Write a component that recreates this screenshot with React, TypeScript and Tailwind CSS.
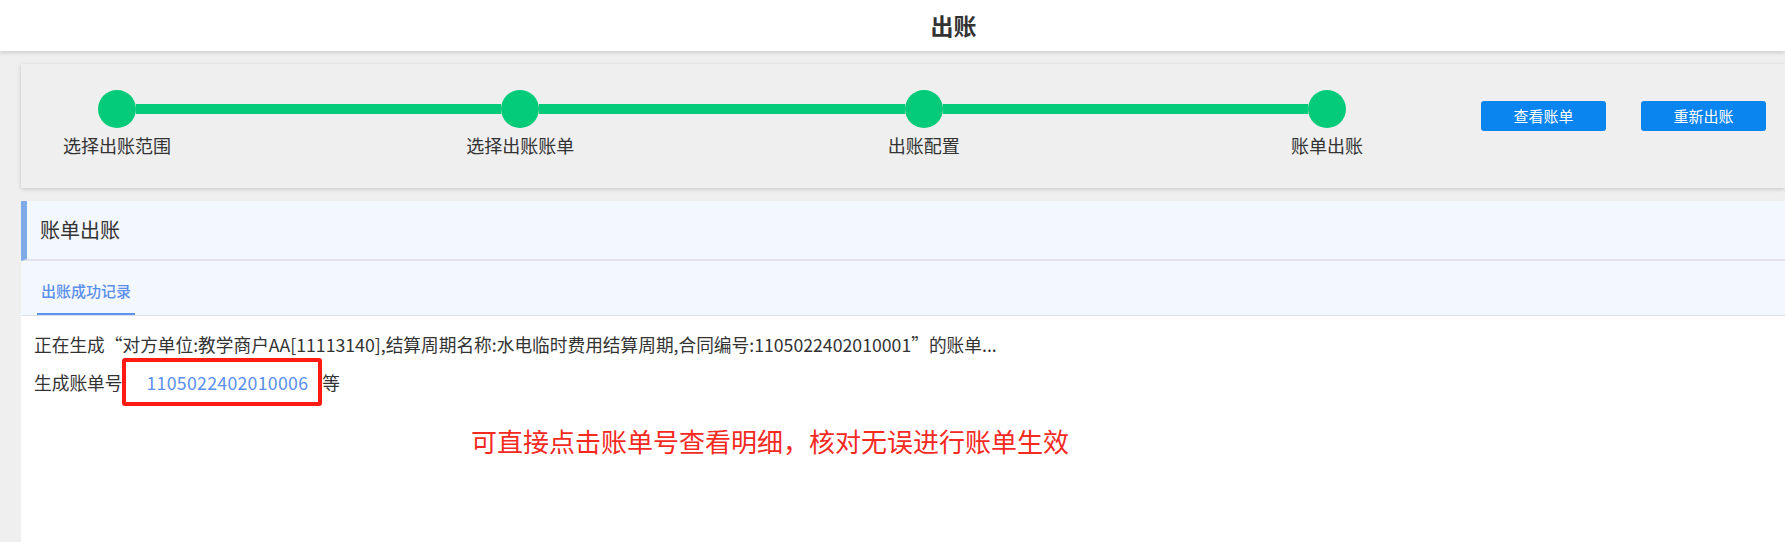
import React from "react";

const font = { fontFamily: '"Noto Sans CJK SC", "Noto Sans", sans-serif' };

function Step({ label }: { label: string }) {
  return (
    <div className="flex w-[38px] flex-col items-center">
      <div className="h-[38px] w-[38px] shrink-0 rounded-full bg-[#03cb7a]" />
      <div className="mt-[5px] whitespace-nowrap text-[18px] leading-[24px] text-[#333]">{label}</div>
    </div>
  );
}

function Seg() {
  return <div className="mt-[14px] h-[10px] flex-1 bg-[#03cb7a]" />;
}

export default function App() {
  return (
    <div className="flex min-h-[542px] w-full flex-col overflow-hidden bg-[#efefef]" style={font}>
      {/* Header */}
      <div className="relative z-10 flex h-[51px] items-center justify-center bg-white pl-[122px] shadow-[0_2px_4px_rgba(0,0,0,0.13)]">
        <span className="text-[23px] font-bold text-[#333]">出账</span>
      </div>

      {/* Steps card */}
      <div className="ml-[21px] mt-[13px] flex h-[124px] items-start bg-[#efefef] pl-[77px] pt-[26px] shadow-[0_1px_4px_rgba(0,0,0,0.18)]">
        <div className="flex w-[1248px] items-start">
          <Step label="选择出账范围" />
          <Seg />
          <Step label="选择出账账单" />
          <Seg />
          <Step label="出账配置" />
          <Seg />
          <Step label="账单出账" />
        </div>
        <div className="ml-[135px] mt-[11px] flex gap-[35px]">
          <button className="flex h-[30px] w-[125px] items-center justify-center rounded-[3px] bg-[#0a84ef] text-[15px] text-white">
            查看账单
          </button>
          <button className="flex h-[30px] w-[125px] items-center justify-center rounded-[3px] bg-[#0a84ef] text-[15px] text-white">
            重新出账
          </button>
        </div>
      </div>

      {/* Panel */}
      <div className="ml-[21px] mt-[13px] flex flex-1 flex-col bg-white">
        <div className="flex h-[60px] items-center border-b-2 border-[#e1e2ea] border-l-[6px] border-l-[#7eaae6] bg-[#f3f7fe] pl-[13px]">
          <span className="text-[20px] text-[#333]">账单出账</span>
        </div>
        <div className="flex h-[55px] items-end border-b border-[#dfe1e8] bg-[#f3f7fe] pl-[16px]">
          <div className="border-b-2 border-[#5b93f0] px-[4px] pb-[12px] text-[15px] font-medium leading-[20px] text-[#5a8fec]">
            出账成功记录
          </div>
        </div>
        <div className="flex flex-1 flex-col bg-white pl-[13px] pt-[14px] text-[17.7px] text-[#333]">
          <div className="leading-[28px] whitespace-nowrap">
            正在生成“对方单位:教学商户AA[11113140],结算周期名称:水电临时费用结算周期,合同编号:1105022402010001”的账单...
          </div>
          <div className="flex items-center whitespace-nowrap">
            <span>生成账单号</span>
            <span className="inline-flex h-[48px] items-center rounded-[3px] border-4 border-[#ff1a14] pl-[20px] pr-[10px] tracking-[0.3px] text-[#5a8ff0]">
              1105022402010006
            </span>
            <span>等</span>
          </div>
          <div className="ml-[437px] mt-[17px] whitespace-nowrap text-[26px] leading-[36px] text-[#f52a1f]">
            可直接点击账单号查看明细，核对无误进行账单生效
          </div>
        </div>
      </div>
    </div>
  );
}
